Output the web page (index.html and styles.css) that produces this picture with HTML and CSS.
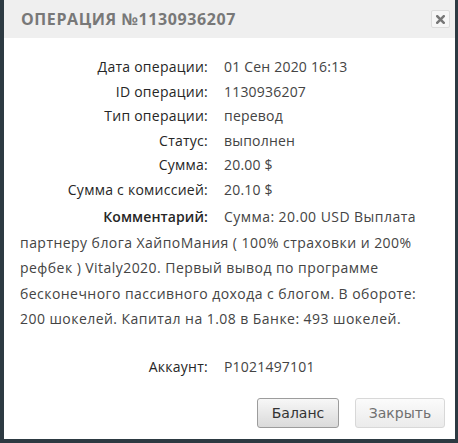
FILE: index.html
```html
<!DOCTYPE html>
<html lang="ru">
<head>
<meta charset="utf-8">
<title>Операция</title>
<link rel="stylesheet" href="styles.css">
</head>
<body>
<div class="dialog">
  <div class="header">
    <span class="title">Операция №1130936207</span>
    <button class="close" aria-label="Закрыть">
      <svg width="9" height="9" viewBox="0 0 9 9"><path d="M1.2 1.2L7.8 7.8M7.8 1.2L1.2 7.8" stroke="#777" stroke-width="2.5" stroke-linecap="square"/></svg>
    </button>
  </div>
  <div class="content">
    <p class="row"><span class="label">Дата операции:</span><span class="value">01 Сен 2020 16:13</span></p>
    <p class="row"><span class="label">ID операции:</span><span class="value">1130936207</span></p>
    <p class="row"><span class="label">Тип операции:</span><span class="value">перевод</span></p>
    <p class="row"><span class="label">Статус:</span><span class="value">выполнен</span></p>
    <p class="row"><span class="label">Сумма:</span><span class="value">20.00 $</span></p>
    <p class="row"><span class="label">Сумма с комиссией:</span><span class="value">20.10 $</span></p>
    <div class="comment">
      <p class="comment-first"><span class="label strong">Комментарий:</span><span class="comment-text">Сумма: 20.00 USD Выплата</span></p>
      <p class="comment-rest">партнеру блога ХайпоМания ( 100% страховки и 200% рефбек ) Vitaly2020. Первый вывод по программе бесконечного пассивного дохода с блогом. В обороте: 200 шокелей. Капитал на 1.08 в Банке: 493 шокелей.</p>
    </div>
    <p class="row account"><span class="label">Аккаунт:</span><span class="value">P1021497101</span></p>
  </div>
  <div class="footer">
    <button class="btn btn-primary">Баланс</button>
    <button class="btn btn-light">Закрыть</button>
  </div>
</div>
</body>
</html>
```
FILE: styles.css
```css
html, body {
  margin: 0;
  padding: 0;
}
body {
  background: #2d3a42;
  height: 443px;
  overflow: hidden;
  font-family: "Open Sans", "DejaVu Sans", sans-serif;
}
.dialog {
  margin-left: 4px;
  width: 451px;
  height: 439px;
  background: #fff;
  display: flex;
  flex-direction: column;
}
.header {
  height: 38px;
  background: #efefef;
  display: flex;
  align-items: center;
  justify-content: space-between;
  padding: 0 5px 0 17px;
}
.title {
  font-size: 16px;
  font-weight: 700;
  text-transform: uppercase;
  color: #787878;
  letter-spacing: 0.6px;
}
.close {
  width: 19px;
  height: 18px;
  padding: 0;
  border: 1px solid #dcdcdc;
  border-radius: 2px;
  background: #f6f6f6;
  display: flex;
  align-items: center;
  justify-content: center;
}
.content {
  padding: 17px 23px 0 16px;
  font-size: 14px;
}
.row {
  margin: 0;
  line-height: 24.5px;
  white-space: nowrap;
}
.label {
  display: inline-block;
  width: 188px;
  margin-right: 16px;
  text-align: right;
  color: #262626;
  letter-spacing: 0.25px;
}
.strong {
  font-weight: 600;
  letter-spacing: 0.1px;
}
.value {
  color: #444;
  letter-spacing: 0.2px;
}
.comment {
  margin-top: 2px;
  line-height: 25.5px;
  color: #444;
}
.comment-first {
  margin: 0;
  white-space: nowrap;
}
.comment-text,
.comment-rest {
  letter-spacing: 0.45px;
}
.comment-rest {
  margin: 0;
}
.account {
  margin-top: 23px;
}
.footer {
  margin-top: auto;
  display: flex;
  justify-content: flex-end;
  gap: 16px;
  padding: 0 10px 11px 0;
}
.btn {
  height: 30px;
  border-radius: 3px;
  font-family: "DejaVu Sans", sans-serif;
  font-size: 14px;
  padding: 0;
}
.btn-primary {
  width: 82px;
  border: 1px solid #9c9c9c;
  background: linear-gradient(#f7f7f7, #dadada);
  color: #333;
}
.btn-light {
  width: 90px;
  border: 1px solid #d8d8d8;
  background: linear-gradient(#fbfbfb, #ebebeb);
  color: #707070;
}
```
